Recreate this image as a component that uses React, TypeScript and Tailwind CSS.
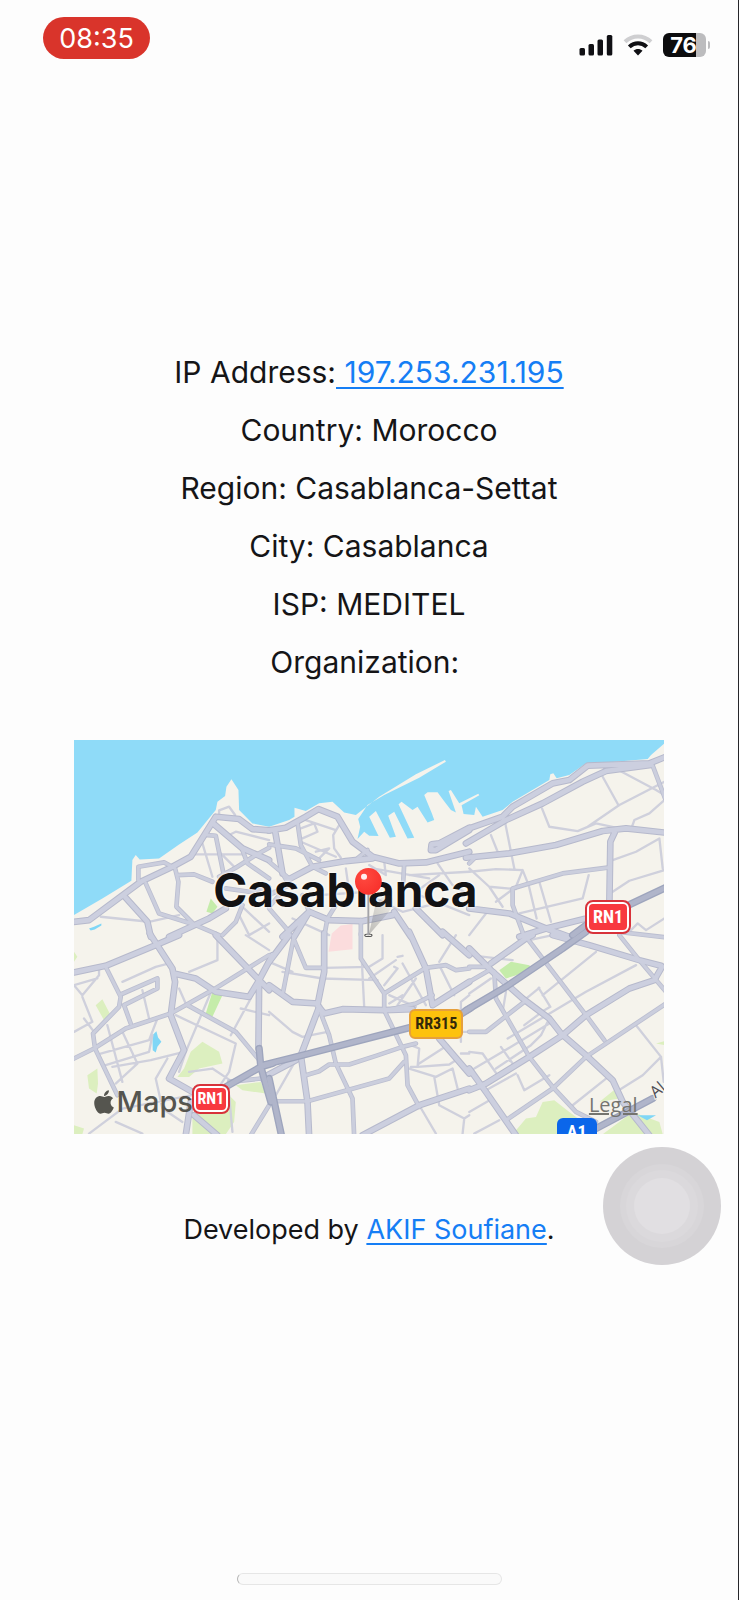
import React from "react";

type Tile = {
  x: number;
  y: number;
  minor: string;
  mid: string;
  major: string;
  highway?: string;
};

const tiles: Tile[] = [
  {
    x: -15,
    y: -15,
    minor:
      "M400 325L430 425M365 358H520M480 300L500 290L600 315M450 240V226L480 215L498 240M400 312L420 298L440 300M95 545L240 560L330 540M510 540L540 600M525 520L600 590M540 600L600 565M455 355L500 400",
    mid: "M208 435V395L285 382L315 398M230 445L270 535L375 568M318 400L328 440L322 515L375 568M325 420L375 418L430 440M520 345L535 385L600 430M600 338L560 360L500 398L450 425M415 300L440 302L462 410M460 600L500 560L520 510M380 570L450 600M470 460L540 470L600 455",
    major: "M0 562L60 555L215 440L310 395L365 365L440 245L510 252L550 282L600 286M170 488L235 560L245 605M300 605L420 550L470 520M432 265L520 340L600 375",
  },
  {
    x: 585,
    y: -15,
    minor:
      "M95 280L135 265L145 290L100 310M110 255L200 285M215 262L192 300L195 340L215 368M150 370L180 340L140 350M95 320L200 365M345 380L350 420L300 390M310 400L480 430M420 420L600 410M505 385L550 450L600 480M80 450L0 470M300 480L400 530L520 500M450 480L600 540M230 400L240 470M70 550L180 600M510 420L440 470M150 480L300 470",
    mid: "M85 262L95 330L130 395L170 415M0 328L80 340L150 375M265 370L295 345M405 385L402 440M0 520L60 590M200 510L175 550L165 605M120 530L100 480M0 515L40 470M40 415L60 450L0 480M275 600V555M0 380L60 430",
    major: "M0 286L50 278L110 245L148 222L205 245L250 320L310 365L390 385L470 382L600 350M18 288L40 415M60 432L130 395L230 378L310 370M600 285L500 345L485 345L487 328L510 325L600 278M40 605L120 530L180 555L280 558L370 540M375 530L425 605M440 520L520 600M75 605L120 530",
  },
  {
    x: 1185,
    y: -15,
    minor:
      "M400 125L447 210M447 105L560 165L585 180M355 275L450 210L585 140M218 220L240 275L325 288L380 265L450 280M585 195L540 235L495 255L488 275M65 300L85 350M108 265L135 400M430 375L500 350L570 310L580 400M430 470L480 437L585 405M0 410L80 402L160 405L178 450M160 405L140 455L80 500M0 400L60 455L100 515M60 455L140 462M150 535L340 490L358 420M210 440L245 560M178 450L202 550M480 590L505 565L530 585L585 550M0 600L50 535",
    mid: "M550 92L587 190M420 397L280 415L130 460V510L165 605M0 385L15 370M600 608L360 580",
    major: "M0 280L100 245L130 215L250 145L300 135L355 92L540 85L590 65M-10 325L110 255L220 205L340 140L410 108L545 90M-10 368L120 355L260 330L400 288L470 280L590 293M438 288L423 320L420 510M0 520L120 535L230 580L300 605M150 605L230 580L350 550L430 525",
    highway: "M310 600L350 570L590 457",
  },
  {
    x: -15,
    y: 585,
    minor:
      "M160 140L260 95L300 85M360 110L445 75V20L440 0M15 150L40 180L90 120V100M40 185L70 260L15 290M220 165L240 250M95 355L240 315L265 250M110 390L240 350L250 300M115 270L160 440M160 290L205 385L140 445M130 395L245 375L345 350M295 370L260 430L280 520L340 560M430 160L350 350M320 240L500 325L480 410L440 470M545 190L485 300M330 160L350 205M60 595L160 520L370 480M140 560L220 595M360 410L430 400L490 440M530 0L600 45M515 220L600 240M85 130L15 150M45 250L75 290M330 410L350 350M480 480L490 590",
    mid: "M110 95L155 185L150 215L72 295L78 340L145 480M15 370L75 340L170 280L305 235L430 165L600 60M355 210L500 290L575 380M155 178L265 130V160L165 210L185 265M480 440L575 430L600 450M545 600L600 510",
    major: "M15 112L110 92L260 30L330 0M242 -5L310 100L318 140L305 240L345 345L300 430L370 470M315 115L380 130L440 170L540 185L570 135M440 0L570 135L610 60M570 135L568 340M600 165L570 135M365 500L350 600M375 540L445 600",
    highway: "M570 340L575 395L605 500M470 455L575 395L610 385",
  },
  {
    x: 585,
    y: 585,
    minor:
      "M165 98L300 95L340 70V0M40 110L160 130L325 135M278 80L285 215M20 480L80 375M0 230L70 290L100 305L175 290M300 130L380 75M345 150L385 100L375 95M385 65L400 62M400 85L470 210M385 210L440 130M360 180L440 215M360 205L400 180M510 90L555 180M510 80L560 0M450 385L535 330M445 395L540 388L560 375M420 400L500 425L550 400L565 460M495 425L510 510L585 550L600 540M450 510L500 595M585 550L580 595M575 320V200L600 180M575 355H600M425 330L450 340L445 395L425 395M0 80L70 110M575 290H600",
    mid: "M75 15L110 98H165M75 0L42 170M155 235L180 300L200 385L250 490L255 605M275 -5V70L345 175V225L410 360L415 450L450 515M20 498H115L360 430L405 380M110 420L150 408L180 388L240 388L320 362L400 335L440 325M345 175L470 98L530 90L560 105L600 100M365 222L440 205L490 180",
    major: "M60 0L0 80M0 150L70 200L145 205M165 -5V110L145 210L165 235L220 222L345 225L430 222M150 215L95 360L115 500L120 605M280 600L450 510L600 460M420 -10L470 100L490 210L600 140M520 -10L600 60M510 310L600 415M-5 420L80 375",
    highway: "M-20 390L100 360L430 275M0 430L38 605M570 240L605 218",
  },
  {
    x: 1185,
    y: 585,
    minor:
      "M380 50L220 180M500 90L350 170L115 310M208 158L243 215L225 225L165 270M210 158L165 195M15 400L150 320L240 265M80 400L185 330L215 300L235 260M0 350L40 355L85 420M95 335L130 385M145 420L165 465L240 420M50 465L140 415M130 75L0 60M310 510L410 430M500 270L575 365L583 440M575 365L520 420L440 470M0 530L70 490M15 595L90 555M110 170L100 230M180 15L250 0M0 175L65 130",
    mid: "M75 110L80 190L180 365L250 455L320 530L380 560M170 5L350 240L405 315M450 0L510 75L590 170M110 555L250 460L350 365L590 205M0 290L50 290L165 200M0 95H60M0 140L60 105",
    major: "M0 40L65 105L160 190L240 250L275 295L350 360L430 435L460 500L540 600M250 0L360 30L510 75L575 92M0 465L50 445L180 365L280 300L350 240L480 160L555 135L578 95M65 85L170 10L190 0M0 400L50 470L140 600",
    highway: "M-10 226L110 155L280 40L350 -10M380 580L550 490",
  },
];

type Level = "minor" | "mid" | "major" | "highway";

const passes: { level: Level; className: string; width: number }[] = [
  { level: "minor", className: "stroke-[#cfd0dc]", width: 7 },
  { level: "mid", className: "stroke-[#bbbed0]", width: 14 },
  { level: "major", className: "stroke-[#b6b9cc]", width: 20 },
  { level: "mid", className: "stroke-[#cbcedd]", width: 9 },
  { level: "major", className: "stroke-[#cccfdf]", width: 14 },
  { level: "highway", className: "stroke-[#9ea5bd]", width: 22 },
  { level: "highway", className: "stroke-[#b0b5ca]", width: 14 },
];

const land =
  "M0 525L85 475L172 422L175 360L185 345L197 358L255 355L315 313L370 277L425 210L430 185L453 168L457 140L472 118L493 150L495 210L535 250L585 260L645 240L661 230V203L695 213L735 190L775 185L810 217L845 225L915 170L1025 103L1112 60L1115 65L1035 113L930 165L880 195L852 237L858 260L850 297L870 275L885 287L913 288L885 230L905 213L947 293L965 290L942 227L960 215L1000 295L1020 293L973 193L982 185L1015 210L1030 200L1060 247L1080 240L1073 220L1050 165L1060 157L1090 157L1107 180L1130 210L1145 217L1123 153L1130 150L1155 190L1212 161L1215 166L1162 196L1168 222L1200 225L1205 200L1225 230L1285 210L1315 185L1425 120L1428 103L1437 100L1447 115L1485 105L1535 70L1605 67L1720 57L1730 45L1770 10V1182H0Z";

const parks =
  "M65 795L85 777L110 825L90 840ZM310 1010L330 985L350 935L385 905L435 935L445 970L375 985L345 1010ZM40 1005L70 985L72 1030L68 1060L45 1045ZM355 1182V1130L465 1065L485 1085L480 1145L455 1182ZM485 1035L560 1025L575 1060L505 1050ZM0 1155L30 1165L25 1182H0ZM0 635L10 650L0 665ZM1315 1182L1355 1135L1385 1130L1405 1085L1440 1080L1485 1115L1525 1145V1182ZM1575 1085L1625 1045L1635 1075ZM1585 1182L1675 1115L1755 1145L1765 1182ZM1745 910L1770 903V915Z";

function MapDrawing() {
  return (
    <svg viewBox="0 0 1770 1182" className="block h-auto w-full bg-[#8fdbf8]" aria-hidden="true">
      <defs>
        <radialGradient id="pinBall" cx="0.35" cy="0.32" r="0.75">
          <stop offset="0" stopColor="#ff4a40" />
          <stop offset="1" stopColor="#f8302b" />
        </radialGradient>
      </defs>
      <path d={land} className="fill-[#f5f3ec]" />
      <path d={parks} className="fill-[#dcefbf]" />
      <path d="M395 820L415 755L445 765L415 830ZM397 515L410 475L430 500L415 520ZM1275 690L1310 665L1365 675L1375 690L1295 715Z" className="fill-[#c5ecaa]" />
      <path d="M773 580L800 556L835 552V627L763 635Z" className="fill-[#fbdcdd]" />
      <path
        d="M45 565L60 560L82 550V556L62 568L50 571ZM235 885L247 873L252 892L262 905L250 920L245 937L236 930ZM1690 1125H1745L1718 1140Z"
        className="fill-[#7fd6f6]"
      />
      {passes.map((pass, i) => (
        <g key={i} fill="none" strokeWidth={pass.width} strokeLinejoin="round" strokeLinecap="round" className={pass.className}>
          {tiles.map((t, j) => (
            <path key={j} d={t[pass.level] || "M-50 -50"} transform={`translate(${t.x} ${t.y})`} />
          ))}
        </g>
      ))}
      <g transform="translate(1743 1075) rotate(-40)">
        <text
          x="0"
          y="0"
          fontSize="48"
          fontFamily="'Open Sans', sans-serif"
          className="fill-[#4d4d55] stroke-[#f5f3ec] stroke-[6px]"
          style={{ paintOrder: "stroke" }}
        >
          Al
        </text>
      </g>
    </svg>
  );
}

function Pin() {
  return (
    <svg viewBox="0 0 120 216" className="absolute top-[32%] left-[47.5%] w-[6.8%]" aria-hidden="true">
      <defs>
        <linearGradient id="pinShadow" x1="0" y1="1" x2="0.8" y2="0">
          <stop offset="0" stopColor="#666" stopOpacity="0.4" />
          <stop offset="1" stopColor="#666" stopOpacity="0.05" />
        </linearGradient>
      </defs>
      <path d="M44 206L62 124C76 92 104 76 116 96C122 112 104 140 88 156Z" fill="url(#pinShadow)" />
      <ellipse cx="43" cy="207" rx="11" ry="4" fill="none" stroke="#555" strokeWidth="3" />
      <path d="M43 80V207" stroke="#8f8f94" strokeWidth="5" />
      <path d="M42 80V207" stroke="#c4c4c8" strokeWidth="2" />
      <circle cx="43" cy="46" r="40" fill="url(#pinBall)" />
      <circle cx="30" cy="32" r="9" fill="#fff" fillOpacity="0.92" />
    </svg>
  );
}

function RouteSign({ children, className }: { children: string; className: string }) {
  return (
    <span
      className={`absolute flex -translate-x-1/2 -translate-y-1/2 items-center justify-center font-['Roboto_Condensed','Liberation_Sans_Narrow','Roboto',sans-serif] font-bold ${className}`}
    >
      {children}
    </span>
  );
}

function CityMap() {
  return (
    <section aria-label="Map of Casablanca" className="relative mx-auto w-4/5 overflow-hidden">
      <MapDrawing />
      <span className="absolute top-[38%] left-[46%] -translate-x-1/2 -translate-y-1/2 text-[46px] leading-14 font-bold text-[#121214] [text-shadow:0_0_3px_#fff,0_0_3px_#fff]">
        Casablanca
      </span>
      <Pin />
      <RouteSign className="top-[45%] left-[90.5%] h-[30px] w-[42px] rounded-md border-2 border-white bg-[#f8393f] text-lg text-white outline-2 outline-[#d8323a]">
        RN1
      </RouteSign>
      <span className="absolute bottom-[4%] left-[3.5%] flex items-center text-[#55554f]">
        <svg viewBox="0 0 384 512" className="h-7 w-5 fill-current" aria-hidden="true">
          <path d="M318.700 268.700c-.2-36.700 16.400-64.400 50-84.800-18.800-26.900-47.200-41.700-84.700-44.600-35.500-2.800-74.300 20.700-88.500 20.700-15 0-49.400-19.700-76.400-19.700C63.300 141.200 4 184.800 4 273.500q0 39.300 14.400 81.200c12.800 36.700 59 126.700 107.200 125.200 25.200-.6 43-17.900 75.800-17.900 31.800 0 48.300 17.900 76.400 17.900 48.600-.7 90.400-82.500 102.600-119.300-65.200-30.700-61.700-90-61.700-91.900zm-56.600-164.200c27.300-32.400 24.800-61.900 24-72.500-24.100 1.400-52 16.400-67.900 34.900-17.500 19.800-27.800 44.300-25.600 71.900 26.100 2 49.900-11.400 69.500-34.300z" />
        </svg>
        <span className="ml-0.5 text-[29px] leading-8 font-medium">Maps</span>
      </span>
      <RouteSign className="top-[91%] left-[23.200%] h-[26px] w-[34px] rounded-md border-2 border-white bg-[#f8393f] text-base text-white outline-2 outline-[#d8323a]">
        RN1
      </RouteSign>
      <RouteSign className="top-[72%] left-[61.400%] h-[30px] w-[54px] rounded-md border-2 border-[#e6a03c] bg-[#fdc20d] text-base text-[#33290a]">
        RR315
      </RouteSign>
      <RouteSign className="top-[99.500%] left-[85.200%] h-7 w-10 rounded-md bg-[#0b66ea] text-lg text-white">A1</RouteSign>
      <a href="#legal" className="absolute right-[4.500%] bottom-[4.500%] font-['Open_Sans',sans-serif] text-xl leading-6 text-[#74746f] underline">
        Legal
      </a>
    </section>
  );
}

function StatusBar() {
  return (
    <header className="flex items-start justify-between pt-[17px] pr-7 pl-[43px]">
      <time className="flex h-[42px] w-[107px] items-center justify-center rounded-full bg-[#d9342b] pt-0.5 text-[27px] text-white">08:35</time>
      <div className="flex items-center gap-[10px] pt-4">
        <svg viewBox="0 0 34 22" className="h-[22px] w-[34px] fill-[#101014]" role="img" aria-label="Mobile signal">
          <rect x="0.500" y="14" width="5.500" height="7.500" rx="1.500" />
          <rect x="9.500" y="10" width="5.500" height="11.500" rx="1.500" />
          <rect x="18.500" y="5.500" width="5.500" height="16" rx="1.500" />
          <rect x="27.800" y="1" width="5.500" height="20.500" rx="1.500" />
        </svg>
        <svg viewBox="0 0 30 22" className="h-[22px] w-[30px]" fill="none" strokeWidth="4" role="img" aria-label="Wi-Fi">
          <path d="M2 7.800C9.500 0.700 20.500 0.700 28 7.800" stroke="#cfcfd1" />
          <path d="M6.300 12.900C11.500 8 18.500 8 23.700 12.900" stroke="#101014" />
          <path d="M15 21.500L10.500 16.800C13 14.500 17 14.500 19.500 16.800Z" fill="#101014" />
        </svg>
        <div className="flex items-center">
          <div className="flex h-6 w-[43px] items-center justify-center rounded-md bg-linear-to-r from-[#0c0c0e] from-76% to-[#bcbcbe] to-76% pr-0.5 text-[22px] leading-6 font-bold text-white">
            76
          </div>
          <div className="ml-0.5 h-2 w-0.5 rounded-r-full bg-[#bcbcbe]" />
        </div>
      </div>
    </header>
  );
}

const details = [
  ["Country", "Morocco"],
  ["Region", "Casablanca-Settat"],
  ["City", "Casablanca"],
  ["ISP", "MEDITEL"],
  ["Organization", ""],
];

export default function App() {
  return (
    <div className="relative flex min-h-screen flex-col border-r border-[#26262a] bg-[#fdfdfd] font-['Inter','Liberation_Sans',sans-serif] text-[#151517]">
      <StatusBar />
      <main className="pt-[284px] text-center">
        <div className="mb-[49px] text-[30px] leading-[58px]">
          <p>
            IP Address:
            <a href="#ip" className="whitespace-pre text-[#157ef5] underline decoration-2 underline-offset-4">
              {" 197.253.231.195"}
            </a>
          </p>
          {details.map(([label, value]) => (
            <p key={label}>
              {label}:{"\u00a0"}
              {value}
            </p>
          ))}
        </div>
        <CityMap />
        <p className="mt-[76px] text-[27px] leading-10">
          Developed by{" "}
          <a href="#author" className="text-[#157ef5] underline decoration-2 underline-offset-4">
            AKIF Soufiane
          </a>
          .
        </p>
      </main>
      <button
        type="button"
        aria-label="AssistiveTouch"
        className="absolute top-[1147px] right-[17px] flex size-[118px] items-center justify-center rounded-full bg-[#d4d2d5]"
      >
        <span className="flex size-[84px] items-center justify-center rounded-full bg-[#d8d6d9]">
          <span className="flex size-[72px] items-center justify-center rounded-full bg-[#dbd9dc]">
            <span className="size-14 rounded-full bg-[#e1dfe2]" />
          </span>
        </span>
      </button>
      <footer className="mt-auto flex justify-center pb-[15px]">
        <div className="h-3 w-[265px] rounded-full border border-[#e6e6e6] border-l-[#b5b5b5] bg-[#fafafa]" />
      </footer>
    </div>
  );
}
